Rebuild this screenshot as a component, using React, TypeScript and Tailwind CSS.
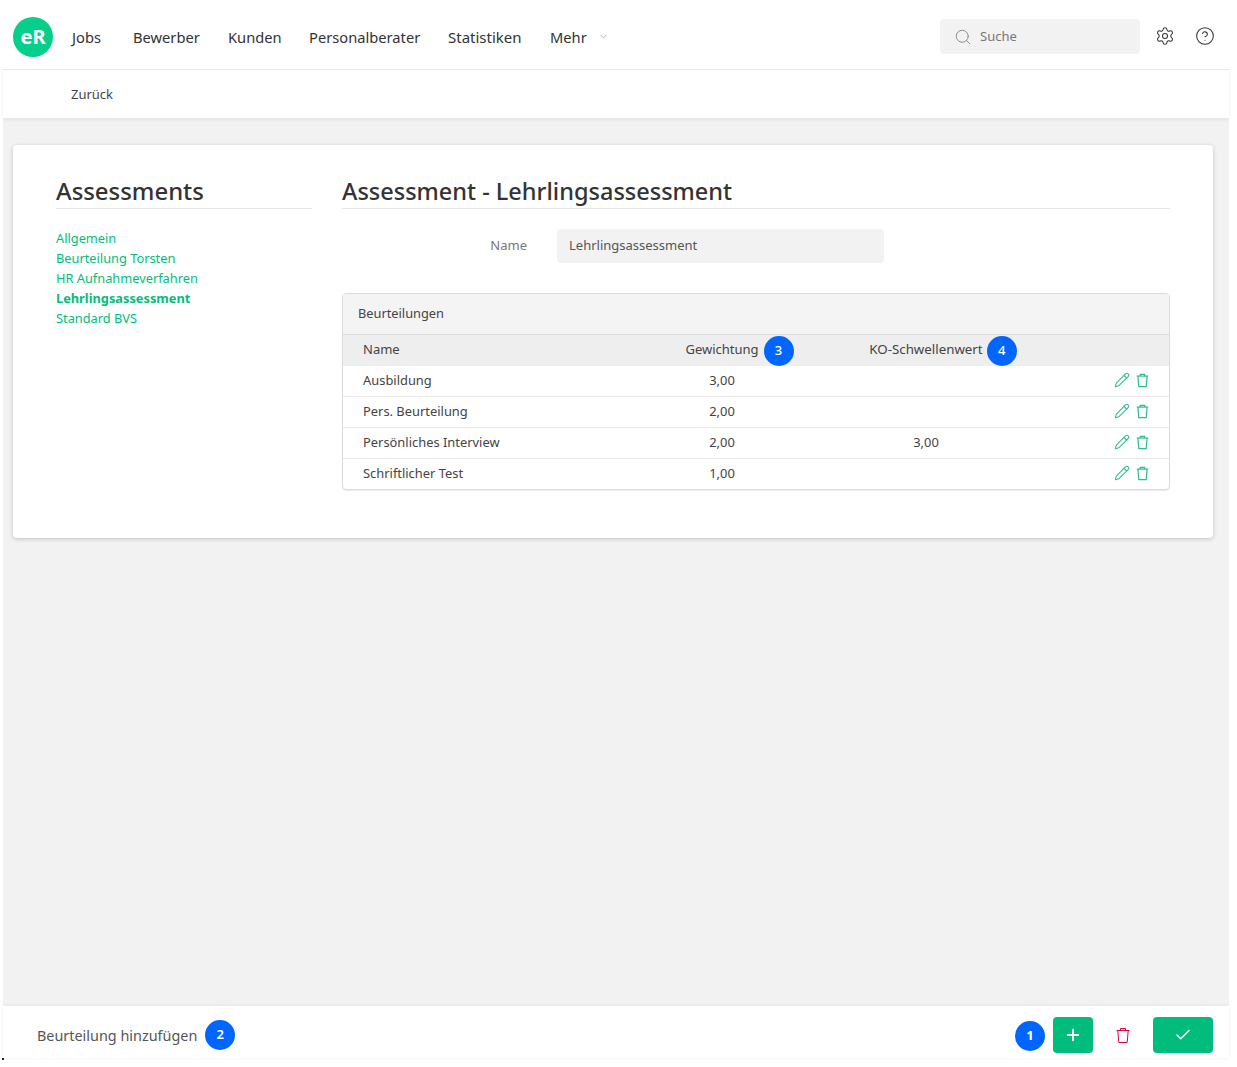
import { ChevronDown, CircleHelp, Check, Pencil, Plus, Search, Settings } from 'lucide-react';

const navItems = [
  { label: 'Jobs', className: 'w-[61px]' },
  { label: 'Bewerber', className: 'w-[95px]' },
  { label: 'Kunden', className: 'w-[81px]' },
  { label: 'Personalberater', className: 'w-[139px]' },
  { label: 'Statistiken', className: 'w-[102px] text-[15px]' },
  { label: 'Mehr', className: 'w-[48px]' },
];

const assessments = ['Allgemein', 'Beurteilung Torsten', 'HR Aufnahmeverfahren', 'Lehrlingsassessment', 'Standard BVS'];

const rows = [
  { name: 'Ausbildung', weight: '3,00', threshold: '' },
  { name: 'Pers. Beurteilung', weight: '2,00', threshold: '' },
  { name: 'Persönliches Interview', weight: '2,00', threshold: '3,00' },
  { name: 'Schriftlicher Test', weight: '1,00', threshold: '' },
];

function TrashIcon({ className, stroke = 1.4 }: { className: string; stroke?: number }) {
  return (
    <svg viewBox="0 0 16 17" fill="none" stroke="currentColor" strokeWidth={stroke} className={className}>
      <path d="M1.5 3.5h13" />
      <path d="M5.5 3.5V1.5h5v2" />
      <path d="M2.8 3.5l1 12h8.4l1-12" />
    </svg>
  );
}

function Badge({ n, className }: { n: number; className?: string }) {
  return (
    <span className={`flex h-[30px] w-[30px] items-center justify-center rounded-full bg-[#0066ff] text-[13px] text-white ${className ?? ''}`}>
      {n}
    </span>
  );
}

export default function App() {
  return (
    <div className="h-[1067px] w-[1237px] overflow-hidden bg-white font-['Noto_Sans',sans-serif] text-[#333]">
      <div className="ml-[3px] w-[1226px]">
        {/* Top nav */}
        <header className="flex h-[70px] items-center border-b border-[#e8e8e8] pl-[10px] pr-[14px] pt-[4px]">
          <div className="mr-[19px] flex h-[40px] w-[40px] items-center justify-center rounded-full bg-[#06cf8b] text-[20px] font-bold text-white">
            eR
          </div>
          {navItems.map((item) => (
            <span key={item.label} className={`mt-[1px] text-[14.7px] text-[#333] ${item.className}`}>
              {item.label}
            </span>
          ))}
          <ChevronDown className="h-[11px] w-[11px] text-[#aaa]" />
          <div className="ml-auto flex h-[35px] w-[200px] items-center rounded bg-[#f2f2f2] pl-[14px] text-[13px] text-[#777]">
            <Search className="mr-[8px] h-[18px] w-[18px] text-[#888]" strokeWidth={1.25} />
            Suche
          </div>
          <Settings className="ml-[15px] -mt-[1px] h-[20px] w-[20px] text-[#333]" strokeWidth={1.25} />
          <CircleHelp className="ml-[20px] -mt-[1px] h-[20px] w-[20px] text-[#333]" strokeWidth={1.25} />
        </header>

        {/* Back bar */}
        <div className="relative z-10 flex h-[48px] items-center bg-white pl-[68px] pt-[2px] text-[13px] text-[#444] shadow-[0_2px_4px_rgba(0,0,0,0.06)]">
          Zurück
        </div>

        {/* Content */}
        <main className="h-[888px] bg-[#f2f2f2] pl-[10px] pt-[27px]">
          <div className="flex h-[393px] w-[1200px] rounded bg-white pl-[43px] pr-[43px] pt-[30px] shadow-[0_1px_4px_rgba(0,0,0,0.2)]">
            <aside className="mr-[30px] w-[256px]">
              <h2 className="h-[34px] border-b border-[#e5e5e5] text-[23.9px] font-[550] leading-[32px] text-[#333]">Assessments</h2>
              <ul className="mt-[19px] text-[12.8px] leading-[20px] text-[#00bd7e]">
                {assessments.map((item) => (
                  <li key={item} className={item === 'Lehrlingsassessment' ? 'font-bold' : ''}>
                    {item}
                  </li>
                ))}
              </ul>
            </aside>

            <section className="w-[828px]">
              <h2 className="h-[34px] border-b border-[#e5e5e5] text-[23.5px] font-[550] leading-[32px] text-[#333]">
                Assessment - Lehrlingsassessment
              </h2>

              <div className="mt-[20px] flex items-center">
                <label className="w-[215px] pr-[30px] text-right text-[13px] text-[#777]">Name</label>
                <div className="flex h-[34px] w-[327px] items-center rounded bg-[#f2f2f2] pl-[12px] text-[13px] text-[#555]">
                  Lehrlingsassessment
                </div>
              </div>

              <div className="mt-[30px] rounded border border-[#dcdcdc] shadow-[0_1px_1px_rgba(0,0,0,0.08)]">
                <div className="flex h-[41px] items-center border-b border-[#dcdcdc] bg-[#f4f4f4] pl-[15px] text-[12.8px] text-[#444]">
                  Beurteilungen
                </div>
                <div className="grid h-[31px] grid-cols-[277px_204px_204px_141px] items-center bg-[#eeeeee] pb-[2px] text-[13px] text-[#444]">
                  <span className="pl-[20px]">Name</span>
                  <span className="relative justify-self-center">
                    Gewichtung
                    <Badge n={3} className="absolute left-[calc(100%+5px)] top-[calc(50%+1px)] -translate-y-1/2 font-medium" />
                  </span>
                  <span className="relative justify-self-center text-[13.3px]">
                    KO-Schwellenwert
                    <Badge n={4} className="absolute left-[calc(100%+4px)] top-[calc(50%+1px)] -translate-y-1/2 font-medium" />
                  </span>
                  <span />
                </div>
                {rows.map((row, i) => (
                  <div
                    key={row.name}
                    className={`grid grid-cols-[277px_204px_204px_141px] items-center text-[12.9px] text-[#444] ${i > 0 ? 'h-[31px] border-t border-[#e8e8e8]' : 'h-[30px]'}`}
                  >
                    <span className="pl-[20px]">{row.name}</span>
                    <span className="text-center">{row.weight}</span>
                    <span className="text-center">{row.threshold}</span>
                    <span className="flex items-center justify-end gap-[5px] pb-[2px] pr-[19px] text-[#2fbf8f]">
                      <Pencil className="h-[16px] w-[16px]" strokeWidth={1.6} />
                      <TrashIcon className="h-[15px] w-[15px]" />
                    </span>
                  </div>
                ))}
              </div>
            </section>
          </div>
        </main>

        {/* Footer */}
        <footer className="relative flex h-[52px] items-center bg-white pl-[34px] pr-[16px] pt-[6px] shadow-[0_-1px_4px_rgba(0,0,0,0.05),0_1px_2px_rgba(0,0,0,0.03)]">
          <span className="mr-[8px] mt-[2px] text-[14.4px] text-[#555]">Beurteilung hinzufügen</span>
          <Badge n={2} className="font-semibold" />
          <Badge n={1} className="ml-auto mr-[8px] mt-[2px] font-bold" />
          <button className="flex h-[36px] w-[40px] items-center justify-center rounded bg-[#00bd7e] text-white">
            <Plus className="h-[18px] w-[18px]" strokeWidth={2.5} />
          </button>
          <TrashIcon className="ml-[22px] h-[17px] w-[16px] text-[#d9044f]" stroke={1} />
          <button className="ml-[22px] flex h-[36px] w-[60px] items-center justify-center rounded bg-[#00bd7e] text-white">
            <Check className="h-[18px] w-[18px]" strokeWidth={2} />
          </button>
        </footer>
        <div className="-ml-[1px] h-[2px] w-[2px] bg-[#222]" />
      </div>
    </div>
  );
}
